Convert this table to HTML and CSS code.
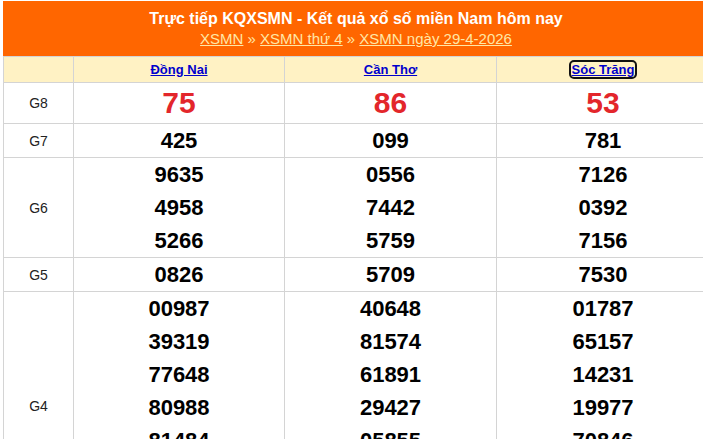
FILE: index.html
```html
<!DOCTYPE html>
<html lang="vi">
<head>
<meta charset="utf-8">
<link rel="stylesheet" href="styles.css">
</head>
<body>
<div class="box">
  <div class="head">
    <h2 class="title">Trực tiếp KQXSMN - Kết quả xổ số miền Nam hôm nay</h2>
    <div class="crumbs"><a href="#">XSMN</a> » <a href="#">XSMN thứ 4</a> » <a href="#">XSMN ngày 29-4-2026</a></div>
  </div>
  <table class="res">
    <colgroup><col class="c0"><col class="c1"><col class="c2"><col class="c3"></colgroup>
    <tr class="prov">
      <th></th>
      <th><a href="#">Đồng Nai</a></th>
      <th><a href="#">Cần Thơ</a></th>
      <th><a href="#" class="focus">Sóc Trăng</a></th>
    </tr>
    <tr class="g8">
      <td class="lbl">G8</td><td><div class="n red">75</div></td><td><div class="n red">86</div></td><td><div class="n red">53</div></td>
    </tr>
    <tr>
      <td class="lbl">G7</td><td><div class="n">425</div></td><td><div class="n">099</div></td><td><div class="n">781</div></td>
    </tr>
    <tr>
      <td class="lbl">G6</td>
      <td><div class="n">9635</div><div class="n">4958</div><div class="n">5266</div></td>
      <td><div class="n">0556</div><div class="n">7442</div><div class="n">5759</div></td>
      <td><div class="n">7126</div><div class="n">0392</div><div class="n">7156</div></td>
    </tr>
    <tr>
      <td class="lbl">G5</td><td><div class="n">0826</div></td><td><div class="n">5709</div></td><td><div class="n">7530</div></td>
    </tr>
    <tr class="g4">
      <td class="lbl">G4</td>
      <td><div class="n">00987</div><div class="n">39319</div><div class="n">77648</div><div class="n">80988</div><div class="n">81484</div></td>
      <td><div class="n">40648</div><div class="n">81574</div><div class="n">61891</div><div class="n">29427</div><div class="n">05855</div></td>
      <td><div class="n">01787</div><div class="n">65157</div><div class="n">14231</div><div class="n">19977</div><div class="n">70846</div></td>
    </tr>
  </table>
</div>
</body>
</html>
```
FILE: styles.css
```css
html, body {
  margin: 0;
  padding: 0;
  background: #fff;
  overflow: hidden;
}
body {
  font-family: "Liberation Sans", Arial, sans-serif;
}
.box {
  margin: 1px 0 0 3px;
  width: 706px;
}
.head {
  background: #ff6600;
  height: 55px;
  text-align: center;
  color: #fff;
  box-sizing: border-box;
  padding-top: 8px;
}
.title {
  margin: 0;
  font-size: 16px;
  font-weight: bold;
  line-height: 20px;
}
.crumbs {
  font-size: 15px;
  line-height: 20px;
  color: #ffe7a6;
}
.crumbs a {
  color: #ffe7a6;
  text-decoration: underline;
}
.res {
  width: 706px;
  border-collapse: collapse;
  table-layout: fixed;
}
.c0 { width: 70px; }
.c1 { width: 211px; }
.c2 { width: 212px; }
.c3 { width: 213px; }
.res td, .res th {
  border: 1px solid #d4d4d4;
  padding: 0;
  text-align: center;
  vertical-align: middle;
}
.prov th {
  background: #fff2c4;
  height: 25px;
  font-size: 13px;
  font-weight: bold;
}
.prov th a {
  color: #0000cc;
  text-decoration: underline;
}
.prov th a.focus {
  outline: 2px solid #111;
  border-radius: 3px;
  padding: 0 1px;
}
.lbl {
  font-size: 14px;
  color: #222;
}
.g4 .lbl {
  vertical-align: top;
  padding-top: 106px;
}
.n {
  font-size: 22px;
  font-weight: bold;
  color: #000;
  line-height: 33px;
}
.g8 td { height: 40px; }
.n.red {
  color: #e3262b;
  font-size: 30px;
  line-height: 40px;
}
```
